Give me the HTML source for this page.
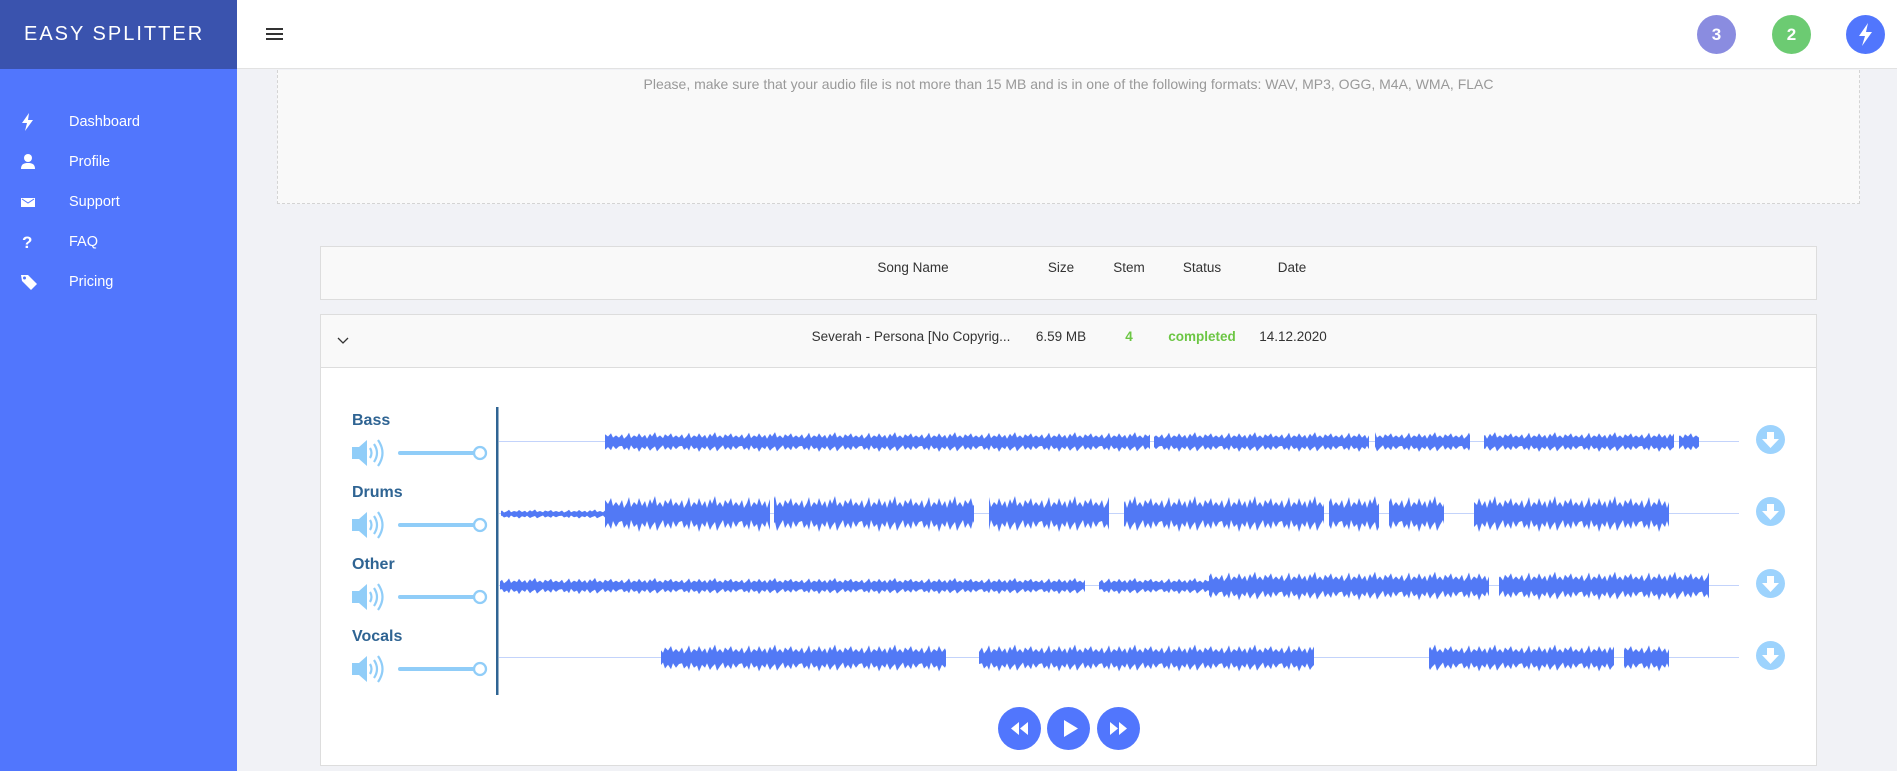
<!DOCTYPE html>
<html><head><meta charset="utf-8"><style>
*{margin:0;padding:0;box-sizing:border-box}
body{width:1897px;height:771px;overflow:hidden;background:#f1f2f6;font-family:"Liberation Sans",sans-serif;position:relative}
.a{position:absolute}
.side{left:0;top:0;width:237px;height:771px;background:#5176fd}
.logo{left:0;top:0;width:237px;height:69px;background:#3a53ae;color:#fff;font-size:20px;letter-spacing:2px;line-height:69px;padding-left:24px;font-weight:300}
.head{left:237px;top:0;right:0;height:69px;background:#fff;border-bottom:1px solid #e2e2e2}
.mi{left:0;width:237px;color:#fff;font-size:14.5px;height:20px;line-height:20px}
.mi span{position:absolute;left:69px}
.mi svg{position:absolute;left:20px;top:1px}
.badge{width:39px;height:39px;border-radius:50%;color:#fff;font-weight:bold;font-size:17px;text-align:center;line-height:39px;top:15px}
.th{font-size:13.5px;color:#333;transform:translateX(-50%);white-space:nowrap}
.lbl{left:352px;color:#2f6493;font-weight:bold;font-size:16px}
.dl{left:1756px;width:29px;height:29px;border-radius:50%;background:#9dd3fd}
.pb{width:43px;height:43px;border-radius:50%;background:#5176fd;top:707px}
</style></head><body>
<div class="a side"></div>
<div class="a logo">EASY SPLITTER</div>
<div class="a mi" style="top:112px"><svg width="16" height="18" viewBox="0 0 16 18"><path d="M9 0L2 10h5l-2 8 8-11H8z" fill="#fff"/></svg><span>Dashboard</span></div>
<div class="a mi" style="top:152px"><svg width="16" height="18" viewBox="0 0 16 18"><circle cx="8" cy="5" r="4" fill="#fff"/><path d="M1 16c0-5 3-6 7-6s7 1 7 6z" fill="#fff"/></svg><span>Profile</span></div>
<div class="a mi" style="top:192px"><svg width="16" height="18" viewBox="0 0 16 18"><rect x="1" y="5" width="14" height="9" fill="#fff"/><path d="M2 6l6 4 6-4" stroke="#5176fd" fill="none"/></svg><span>Support</span></div>
<div class="a mi" style="top:232px"><svg width="16" height="18" viewBox="0 0 16 18"><text x="2" y="15" fill="#fff" font-weight="bold" font-size="17" font-family="Liberation Sans">?</text></svg><span>FAQ</span></div>
<div class="a mi" style="top:272px"><svg width="18" height="18" viewBox="0 0 18 18"><path d="M1 2h7l9 9-6 6-9-9z" fill="#fff"/><circle cx="4.5" cy="5" r="1.5" fill="#5176fd"/></svg><span>Pricing</span></div>
<div class="a head"></div>
<svg class="a" style="left:266px;top:27px" width="17" height="14"><rect y="1" width="17" height="2" fill="#333"/><rect y="6" width="17" height="2" fill="#333"/><rect y="11" width="17" height="2" fill="#333"/></svg>
<div class="a badge" style="left:1697px;background:#8a8ce0">3</div>
<div class="a badge" style="left:1772px;background:#6ccb72">2</div>
<div class="a badge" style="left:1846px;background:#5176fd"><svg width="39" height="39" viewBox="0 0 39 39"><path d="M22 8l-9 13h6l-3 10 10-14h-6z" fill="#fff"/></svg></div>
<div class="a" style="left:277px;top:70px;width:1583px;height:134px;background:#f9f9f9;border:1px dashed #d4d4d4;border-top:none"></div>
<div class="a" style="left:277px;width:1583px;top:76px;text-align:center;font-size:14px;color:#999">Please, make sure that your audio file is not more than 15 MB and is in one of the following formats: WAV, MP3, OGG, M4A, WMA, FLAC</div>
<div class="a" style="left:320px;top:246px;width:1497px;height:54px;background:#f9f9f9;border:1px solid #ddd"></div>
<div class="a th" style="left:913px;top:260px">Song Name</div>
<div class="a th" style="left:1061px;top:260px">Size</div>
<div class="a th" style="left:1129px;top:260px">Stem</div>
<div class="a th" style="left:1202px;top:260px">Status</div>
<div class="a th" style="left:1292px;top:260px">Date</div>
<div class="a" style="left:320px;top:314px;width:1497px;height:452px;background:#fff;border:1px solid #ddd"></div>
<div class="a" style="left:321px;top:315px;width:1495px;height:53px;background:#f9f9f9;border-bottom:1px solid #ddd"></div>
<svg class="a" style="left:337px;top:337px" width="12" height="8"><path d="M1 1l5 5 5-5" stroke="#333" stroke-width="1.3" fill="none"/></svg>
<div class="a th" style="left:911px;top:329px">Severah - Persona [No Copyrig...</div>
<div class="a th" style="left:1061px;top:329px">6.59 MB</div>
<div class="a th" style="left:1129px;top:329px;color:#6cc644;font-weight:bold">4</div>
<div class="a th" style="left:1202px;top:329px;color:#6cc644;font-weight:bold">completed</div>
<div class="a th" style="left:1293px;top:329px">14.12.2020</div>
<div class="a lbl" style="top:412px">Bass</div>
<div class="a lbl" style="top:484px">Drums</div>
<div class="a lbl" style="top:556px">Other</div>
<div class="a lbl" style="top:628px">Vocals</div>
<svg class="a" style="left:340px;top:400px" width="160" height="300">
<defs><g id="sp"><path d="M12 8h7l8-7v26l-8-7h-7z" fill="#90cdf8"/><path d="M30 9q3 5 0 10M34 5q6 9 0 18M38 1q9 13 0 26" stroke="#90cdf8" stroke-width="2.2" fill="none"/></g>
<g id="sl"><rect x="58" y="0" width="82" height="4" rx="2" fill="#90cdf8"/><circle cx="140" cy="2" r="6" fill="#fff" stroke="#90cdf8" stroke-width="2.3"/></g></defs>
<use href="#sp" y="39"/><use href="#sl" y="51"/>
<use href="#sp" y="111"/><use href="#sl" y="123"/>
<use href="#sp" y="183"/><use href="#sl" y="195"/>
<use href="#sp" y="255"/><use href="#sl" y="267"/>
<rect x="156" y="7" width="2.5" height="288" fill="#2f6493"/>
</svg>
<svg class="a" style="left:499px;top:400px" width="1245" height="300">
<defs><pattern id="w" width="60" height="40" patternUnits="userSpaceOnUse" y="-20">
<path d="M0,12 3,6 5,14 8,9 10,3 12,13 15,8 18,11 20,4 23,12 26,7 28,14 31,5 33,10 36,2 38,12 41,8 44,13 46,6 49,10 52,4 54,12 57,8 60,12 60,28 57,33 54,27 52,35 49,29 46,34 44,26 41,31 38,37 36,28 33,32 31,36 28,27 26,33 23,29 20,38 18,30 15,33 12,26 10,36 8,30 5,34 3,27 0,28Z" fill="#5279f5"/></pattern></defs>
<g fill="#c3d3fb"><rect y="41" width="1240" height="1"/><rect y="113" width="1240" height="1"/><rect y="185" width="1240" height="1"/><rect y="257" width="1240" height="1"/></g>
<g fill="url(#w)">
<g transform="translate(0,42) scale(1,0.55)"><rect x="106" y="-20" width="545" height="40"/><rect x="655" y="-20" width="215" height="40"/><rect x="876" y="-20" width="95" height="40"/><rect x="985" y="-20" width="190" height="40"/><rect x="1180" y="-20" width="20" height="40"/></g>
<g transform="translate(0,114) scale(1,1)"><rect x="106" y="-20" width="165" height="40"/><rect x="275" y="-20" width="200" height="40"/><rect x="490" y="-20" width="120" height="40"/><rect x="625" y="-20" width="200" height="40"/><rect x="830" y="-20" width="50" height="40"/><rect x="890" y="-20" width="55" height="40"/><rect x="975" y="-20" width="195" height="40"/></g>
<g transform="translate(0,114) scale(1,0.25)"><rect x="2" y="-20" width="104" height="40"/></g>
<g transform="translate(0,186) scale(1,0.45)"><rect x="1" y="-20" width="585" height="40"/><rect x="600" y="-20" width="110" height="40"/></g>
<g transform="translate(0,186) scale(1,0.8)"><rect x="710" y="-20" width="280" height="40"/><rect x="1000" y="-20" width="180" height="40"/><rect x="1180" y="-20" width="30" height="40"/></g>
<g transform="translate(0,258) scale(1,0.75)"><rect x="162" y="-20" width="285" height="40"/><rect x="480" y="-20" width="335" height="40"/><rect x="930" y="-20" width="185" height="40"/><rect x="1125" y="-20" width="45" height="40"/></g>
</g></svg>
<div class="a dl" style="top:425px"></div><div class="a dl" style="top:497px"></div><div class="a dl" style="top:569px"></div><div class="a dl" style="top:641px"></div>
<svg class="a" style="left:1756px;top:425px" width="29" height="250"><defs><path id="ar" d="M11 7h7v7h5l-8.5 9-8.5-9h5z" fill="#fff"/></defs><use href="#ar"/><use href="#ar" y="72"/><use href="#ar" y="144"/><use href="#ar" y="216"/></svg>
<div class="a pb" style="left:998px"><svg width="43" height="43"><path d="M21 15v13l-8-6.5zM30 15v13l-8-6.5z" fill="#fff"/></svg></div>
<div class="a pb" style="left:1047px"><svg width="43" height="43"><path d="M17 13v17l14-8.5z" fill="#fff"/></svg></div>
<div class="a pb" style="left:1097px"><svg width="43" height="43"><path d="M13 15v13l8-6.5zM22 15v13l8-6.5z" fill="#fff"/></svg></div>
</body></html>
